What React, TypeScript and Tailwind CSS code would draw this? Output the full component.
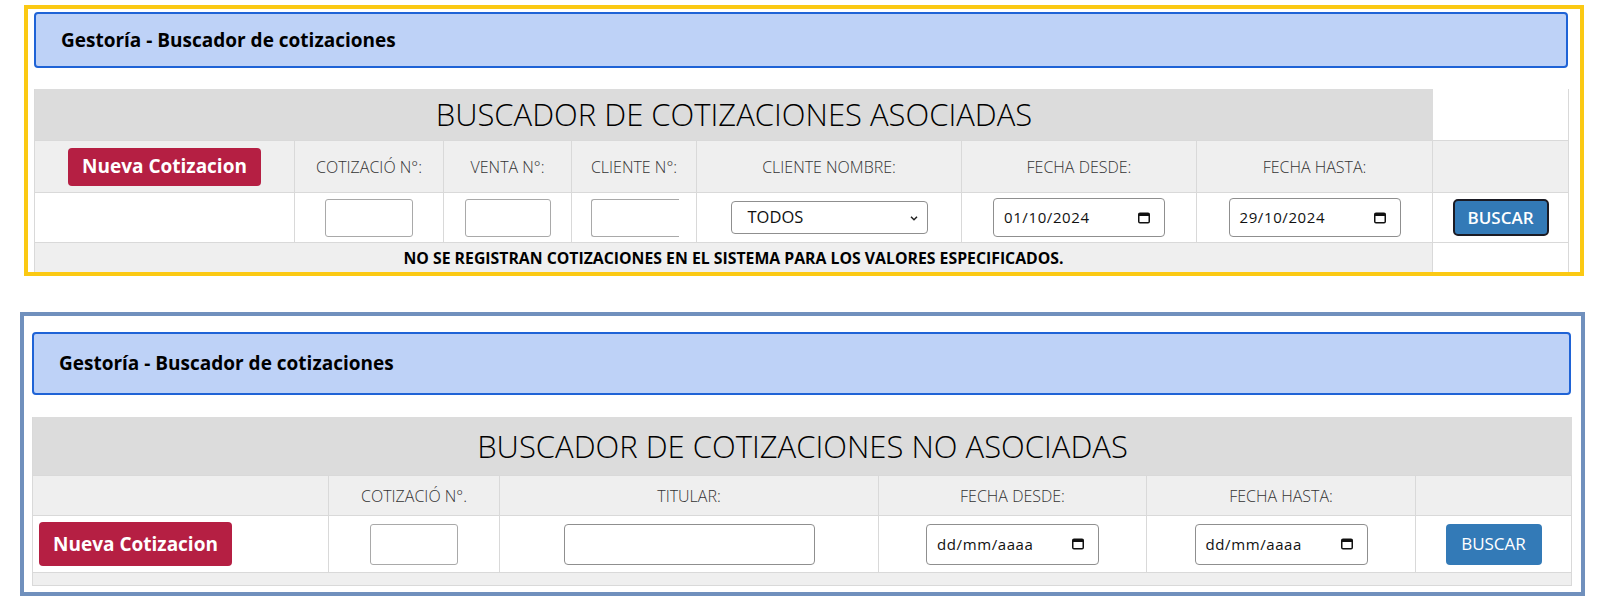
const font = "font-['Open_Sans',sans-serif]"
const line = 'border-[#d9d9d9]'
const label = 'flex items-center justify-center text-[16px] font-light uppercase text-[#333]'

function CalendarIcon() {
  return (
    <svg width="14" height="14" viewBox="0 0 14 14" fill="none">
      <rect x="1.75" y="2.25" width="10.5" height="9.5" rx="1.25" stroke="#111" strokeWidth="1.5" />
      <rect x="1.75" y="2.25" width="10.5" height="2.75" fill="#111" />
    </svg>
  )
}

function DateField({ value, className }: { value: string; className: string }) {
  return (
    <div
      className={`flex items-center justify-between rounded-[4px] border border-[#8f8f8f] bg-white pl-[10px] pr-[13px] text-[15px] text-[#111] ${className}`}
    >
      <span className="tracking-[0.6px]">{value}</span>
      <CalendarIcon />
    </div>
  )
}

function Header() {
  return (
    <div className="flex h-full items-center rounded-[4px] border-2 border-[#1f63d6] bg-[#bed2f7] pl-[25px] text-[19px] font-bold text-black">
      Gestoría - Buscador de cotizaciones
    </div>
  )
}

function NuevaBtn({ className }: { className: string }) {
  return (
    <button
      type="button"
      className={`w-[193px] rounded-[4px] bg-[#b51f43] text-[19px] font-bold text-white ${className}`}
    >
      Nueva Cotizacion
    </button>
  )
}

function Asociadas() {
  const cell = `border-r border-t ${line}`
  return (
    <div className="grid grid-cols-[260px_149px_128px_125px_265px_235px_236px_136px] border-l border-[#d9d9d9]">
      <div className="col-span-7 flex h-[51px] items-center justify-center bg-[#dcdcdc] text-[31px] font-light text-black">
        BUSCADOR DE COTIZACIONES ASOCIADAS
      </div>
      <div className={`border-r ${line} bg-white`} />

      <div className={`${cell} flex h-[52px] items-center justify-center bg-[#efefef]`}>
        <NuevaBtn className="h-[38px]" />
      </div>
      <div className={`${cell} ${label} bg-[#efefef]`}>Cotizació N°:</div>
      <div className={`${cell} ${label} bg-[#efefef]`}>Venta N°:</div>
      <div className={`${cell} ${label} bg-[#efefef]`}>Cliente N°:</div>
      <div className={`${cell} ${label} bg-[#efefef]`}>Cliente nombre:</div>
      <div className={`${cell} ${label} bg-[#efefef]`}>Fecha desde:</div>
      <div className={`${cell} ${label} bg-[#efefef]`}>Fecha hasta:</div>
      <div className={`${cell} bg-[#efefef]`} />

      <div className={`${cell} h-[50px] bg-white`} />
      <div className={`${cell} flex items-center justify-center`}>
        <div className="h-[38px] w-[88px] rounded-[3px] border border-[#a9a9a9] bg-white" />
      </div>
      <div className={`${cell} flex items-center justify-center`}>
        <div className="h-[38px] w-[86px] rounded-[3px] border border-[#a9a9a9] bg-white" />
      </div>
      <div className={`${cell} flex items-center justify-center pl-[2px]`}>
        <div className="h-[38px] w-[88px] rounded-l-[3px] border border-r-0 border-[#a9a9a9] bg-white" />
      </div>
      <div className={`${cell} flex items-center justify-center`}>
        <div className="flex h-[33px] w-[197px] items-center justify-between rounded-[4px] border border-[#8f8f8f] bg-white pl-[16px] pr-[8px] text-[16.5px] text-[#111]">
          <span>TODOS</span>
          <svg width="10" height="10" viewBox="0 0 10 10" fill="none">
            <path d="M2 3.75 5 6.75l3-3" stroke="#222" strokeWidth="1.5" />
          </svg>
        </div>
      </div>
      <div className={`${cell} flex items-center justify-center`}>
        <DateField value="01/10/2024" className="h-[39px] w-[172px]" />
      </div>
      <div className={`${cell} flex items-center justify-center`}>
        <DateField value="29/10/2024" className="h-[39px] w-[172px]" />
      </div>
      <div className={`${cell} flex items-center justify-center`}>
        <button
          type="button"
          className="h-[37px] w-[96px] rounded-[5px] border-2 border-[#1b1b24] bg-[#337ab7] text-[17px] font-semibold text-white"
        >
          BUSCAR
        </button>
      </div>

      <div className={`${cell} col-span-7 flex h-[34px] items-start justify-center bg-[#efefef] pt-[4px] text-[15.8px] font-bold text-black`}>
        NO SE REGISTRAN COTIZACIONES EN EL SISTEMA PARA LOS VALORES ESPECIFICADOS.
      </div>
      <div className={`${cell} bg-white`} />
    </div>
  )
}

function NoAsociadas() {
  const cell = `border-r border-t ${line}`
  return (
    <div className="grid grid-cols-[296px_171px_379px_268px_269px_156px] border-l border-[#d9d9d9]">
      <div className="col-span-6 flex h-[58px] items-center justify-center bg-[#dcdcdc] text-[31px] font-light text-black">
        BUSCADOR DE COTIZACIONES NO ASOCIADAS
      </div>

      <div className={`${cell} h-[40px] bg-[#efefef]`} />
      <div className={`${cell} ${label} bg-[#efefef]`}>Cotizació N°.</div>
      <div className={`${cell} ${label} bg-[#efefef]`}>Titular:</div>
      <div className={`${cell} ${label} bg-[#efefef]`}>Fecha desde:</div>
      <div className={`${cell} ${label} bg-[#efefef]`}>Fecha hasta:</div>
      <div className={`${cell} bg-[#efefef]`} />

      <div className={`${cell} flex h-[57px] items-center pl-[6px]`}>
        <NuevaBtn className="h-[44px]" />
      </div>
      <div className={`${cell} flex items-center justify-center`}>
        <div className="h-[41px] w-[88px] rounded-[3px] border border-[#a9a9a9] bg-white" />
      </div>
      <div className={`${cell} flex items-center justify-center`}>
        <div className="h-[41px] w-[251px] rounded-[4px] border border-[#8f8f8f] bg-white" />
      </div>
      <div className={`${cell} flex items-center justify-center`}>
        <DateField value="dd/mm/aaaa" className="h-[41px] w-[173px]" />
      </div>
      <div className={`${cell} flex items-center justify-center`}>
        <DateField value="dd/mm/aaaa" className="h-[41px] w-[173px]" />
      </div>
      <div className={`${cell} flex items-center justify-center`}>
        <button type="button" className="h-[41px] w-[96px] rounded-[4px] bg-[#337ab7] text-[17px] text-white">
          BUSCAR
        </button>
      </div>

      <div className={`${cell} col-span-6 h-[14px] border-b bg-[#efefef]`} />
    </div>
  )
}

export default function App() {
  return (
    <div className={`${font} h-[604px] w-[1600px] bg-white pt-[5px]`}>
      <div className="ml-[24px] h-[271px] w-[1560px] overflow-hidden border-4 border-[#fbc913] pl-[6px] pr-[12px] pt-[3px]">
        <div className="h-[56px]">
          <Header />
        </div>
        <div className="mt-[21px]">
          <Asociadas />
        </div>
      </div>

      <div className="ml-[20px] mt-[36px] h-[284px] w-[1565px] overflow-hidden border-4 border-[#7090bd] pl-[8px] pr-[10px] pt-[16px]">
        <div className="h-[63px]">
          <Header />
        </div>
        <div className="mt-[22px]">
          <NoAsociadas />
        </div>
      </div>
    </div>
  )
}
